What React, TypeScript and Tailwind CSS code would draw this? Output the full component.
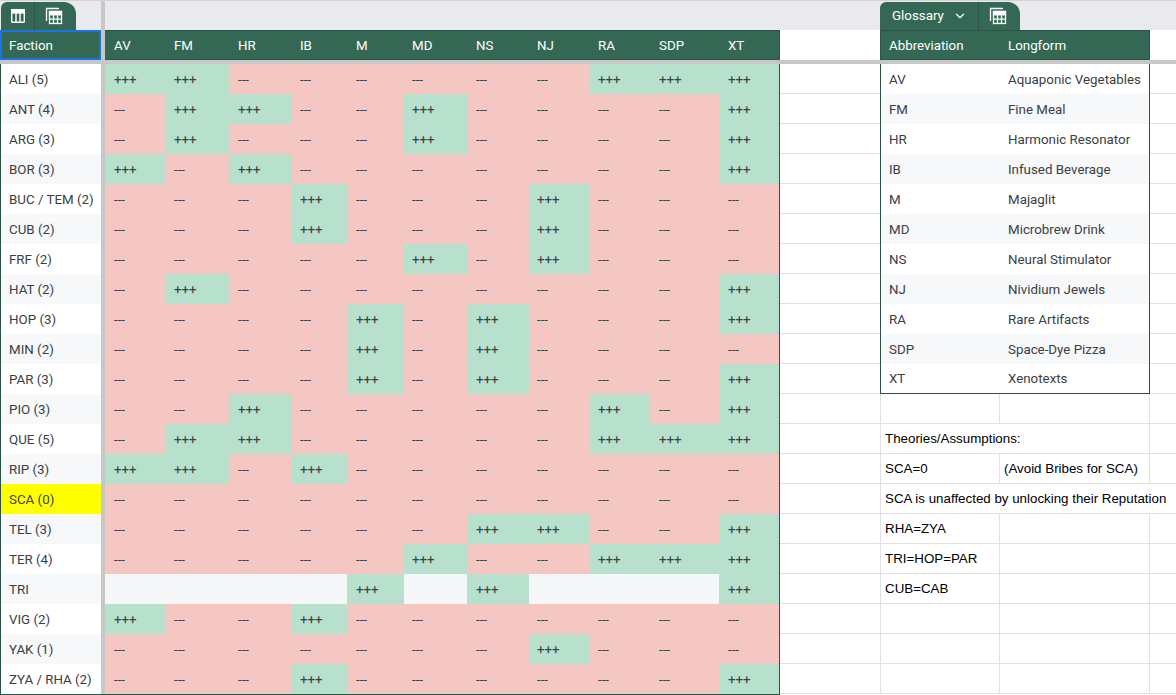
import { ChevronDown } from "lucide-react"

const columns = [
  { key: "AV", width: "w-[61px]", pad: "pl-[9px]" },
  { key: "FM", width: "w-[63px]", pad: "pl-2" },
  { key: "HR", width: "w-[63px]", pad: "pl-[9px]" },
  { key: "IB", width: "w-[55px]", pad: "pl-2" },
  { key: "M", width: "w-[57px]", pad: "pl-[9px]" },
  { key: "MD", width: "w-[63px]", pad: "pl-2" },
  { key: "NS", width: "w-[62px]", pad: "pl-[9px]" },
  { key: "NJ", width: "w-[61px]", pad: "pl-2" },
  { key: "RA", width: "w-[60px]", pad: "pl-2" },
  { key: "SDP", width: "w-[69px]", pad: "pl-[9px]" },
  { key: "XT", width: "w-[60px]", pad: "pl-[9px]" },
]

// + = green "+++", - = red "---", space = empty cell
const factions: [string, string][] = [
  ["ALI (5)", "++------+++"],
  ["ANT (4)", "-++--+----+"],
  ["ARG (3)", "-+---+----+"],
  ["BOR (3)", "+-+-------+"],
  ["BUC / TEM (2)", "---+---+---"],
  ["CUB (2)", "---+---+---"],
  ["FRF (2)", "-----+-+---"],
  ["HAT (2)", "-+--------+"],
  ["HOP (3)", "----+-+---+"],
  ["MIN (2)", "----+-+----"],
  ["PAR (3)", "----+-+---+"],
  ["PIO (3)", "--+-----+-+"],
  ["QUE (5)", "-++-----+++"],
  ["RIP (3)", "++-+-------"],
  ["SCA (0)", "-----------"],
  ["TEL (3)", "------++--+"],
  ["TER (4)", "-----+--+++"],
  ["TRI", "    + +   +"],
  ["VIG (2)", "+--+-------"],
  ["YAK (1)", "-------+---"],
  ["ZYA / RHA (2)", "---+------+"],
]

const glossary: [string, string][] = [
  ["AV", "Aquaponic Vegetables"],
  ["FM", "Fine Meal"],
  ["HR", "Harmonic Resonator"],
  ["IB", "Infused Beverage"],
  ["M", "Majaglit"],
  ["MD", "Microbrew Drink"],
  ["NS", "Neural Stimulator"],
  ["NJ", "Nividium Jewels"],
  ["RA", "Rare Artifacts"],
  ["SDP", "Space-Dye Pizza"],
  ["XT", "Xenotexts"],
]

type Note =
  | { kind: "empty" }
  | { kind: "pair"; a: string; b?: string }
  | { kind: "span"; text: string; wide?: boolean }

const notes: Note[] = [
  { kind: "empty" },
  { kind: "span", text: "Theories/Assumptions:" },
  { kind: "pair", a: "SCA=0", b: "(Avoid Bribes for SCA)" },
  { kind: "span", text: "SCA is unaffected by unlocking their Reputation", wide: true },
  { kind: "pair", a: "RHA=ZYA" },
  { kind: "pair", a: "TRI=HOP=PAR" },
  { kind: "pair", a: "CUB=CAB" },
  { kind: "empty" },
  { kind: "empty" },
  { kind: "empty" },
]

function TableIcon() {
  return (
    <svg width="16" height="16" viewBox="0 0 16 16" fill="none" stroke="white" strokeWidth="1.4">
      <rect x="1.7" y="1.7" width="12.6" height="12.6" rx="0.8" />
      <rect x="1.7" y="1.7" width="12.6" height="3.2" fill="white" />
      <path d="M6 4.9V14.3M10 4.9V14.3" />
    </svg>
  )
}

function StackedTableIcon() {
  return (
    <svg width="18" height="18" viewBox="0 0 18 18" fill="none" stroke="white" strokeWidth="1.3">
      <path d="M1.5 14V1.5H14" />
      <rect x="4.5" y="4.5" width="12" height="12" />
      <rect x="4.5" y="4.5" width="12" height="3.3" fill="white" />
      <path d="M4.5 12.2H16.5M8.5 7.8V16.5M12.5 7.8V16.5" />
    </svg>
  )
}

function NoteCells({ note }: { note: Note }) {
  const text = "font-['Liberation_Sans',Arial,sans-serif] text-[13.33px] text-black pt-px"
  if (note.kind === "span" && note.wide) {
    return (
      <div className={`flex h-[30px] flex-1 items-center whitespace-nowrap border-b border-l border-[#e1e1e1] pl-1 ${text}`}>
        {note.text}
      </div>
    )
  }
  if (note.kind === "span") {
    return (
      <>
        <div className={`flex h-[30px] w-[270px] shrink-0 items-center whitespace-nowrap border-x border-b border-[#e1e1e1] pl-1 ${text}`}>
          {note.text}
        </div>
        <div className="h-[30px] flex-1 border-b border-[#e1e1e1]" />
      </>
    )
  }
  return (
    <>
      <div className={`flex h-[30px] w-[119px] shrink-0 items-center whitespace-nowrap border-b border-l border-[#e1e1e1] pl-1 ${text}`}>
        {note.kind === "pair" ? note.a : null}
      </div>
      <div className={`flex h-[30px] w-[151px] shrink-0 items-center whitespace-nowrap border-x border-b border-[#e1e1e1] pl-1 ${text}`}>
        {note.kind === "pair" ? note.b : null}
      </div>
      <div className="h-[30px] flex-1 border-b border-[#e1e1e1]" />
    </>
  )
}

export default function App() {
  return (
    <div className="h-[695px] w-[1176px] overflow-hidden bg-white font-['Roboto',sans-serif] text-[13.33px] text-[#3c4043]">
      {/* sheet tabs strip */}
      <div className="flex h-[30px] border-t border-[#d3d3d3] bg-[#e8eaed]">
        <div className="flex w-[101px] shrink-0 items-end pl-px">
          <div className="flex h-[28px] w-[75px] items-center rounded-tl-md rounded-tr-xl bg-[#356854]">
            <div className="flex h-full w-[34px] items-center justify-center border-r border-[#2a5443]">
              <TableIcon />
            </div>
            <div className="flex flex-1 items-center justify-center pr-1">
              <StackedTableIcon />
            </div>
          </div>
        </div>
        <div className="w-[4px] shrink-0 bg-[#c7c7c7]" />
        <div className="flex flex-1 items-end pl-[775px]">
          <div className="flex h-[28px] w-[140px] items-center rounded-tl-md rounded-tr-xl bg-[#356854] text-white">
            <div className="flex h-full w-[99px] items-center gap-[9px] border-r border-[#2a5443] pl-3">
              <span>Glossary</span>
              <ChevronDown size={14} strokeWidth={2.2} />
            </div>
            <div className="flex flex-1 items-center justify-center pr-1">
              <StackedTableIcon />
            </div>
          </div>
        </div>
      </div>

      {/* header row */}
      <div className="flex h-[30px]">
        <div className="flex w-[101px] shrink-0 items-center border-2 border-[#1a73e8] bg-[#356854] pl-[7px] pt-px text-white">
          Faction
        </div>
        <div className="w-[4px] shrink-0 bg-[#c7c7c7]" />
        {columns.map((c) => (
          <div
            key={c.key}
            className={`flex shrink-0 items-center border-y border-[#2a5443] bg-[#356854] pt-px text-white ${c.width} ${c.pad}`}
          >
            {c.key}
          </div>
        ))}
        <div className="w-px shrink-0 bg-[#2a5443]" />
        <div className="w-[100px] shrink-0" />
        <div className="flex w-[270px] shrink-0 items-center border border-[#2a5443] bg-[#356854] pt-px text-white">
          <div className="w-[118px] pl-2">Abbreviation</div>
          <div className="pl-[9px]">Longform</div>
        </div>
        <div className="flex-1" />
      </div>

      {/* frozen row divider */}
      <div className="h-[4px] bg-[#c7c7c7]" />

      {/* data rows */}
      {factions.map(([name, marks], r) => {
        const factionBg =
          name === "SCA (0)"
            ? "bg-[#ffff00]"
            : r % 2 === 1
              ? "bg-[#f6f8f9]"
              : "bg-white"
        return (
          <div key={name} className="flex h-[30px]">
            <div className={`flex w-[101px] shrink-0 items-center whitespace-nowrap border-l border-[#2a5443] pl-[8px] pt-px ${factionBg}`}>
              {name}
            </div>
            <div className="w-[4px] shrink-0 bg-[#c7c7c7]" />
            {columns.map((c, i) => {
              const m = marks[i]
              const bg =
                m === "+" ? "bg-[#b7e1cd]" : m === "-" ? "bg-[#f4c7c3]" : "bg-[#f6f7f9]"
              return (
                <div key={c.key} className={`flex shrink-0 items-center pt-px ${c.width} ${c.pad} ${bg}`}>
                  {m === "+" ? "+++" : m === "-" ? "---" : ""}
                </div>
              )
            })}
            <div className="w-px shrink-0 bg-[#2a5443]" />
            <div className="w-[100px] shrink-0 border-b border-[#e1e1e1]" />
            {r < glossary.length ? (
              <>
                <div
                  className={`flex w-[270px] shrink-0 items-center border-x border-[#2a5443] pt-px ${
                    r === glossary.length - 1 ? "border-b" : ""
                  } ${r % 2 === 1 ? "bg-[#f6f8f9]" : "bg-white"}`}
                >
                  <div className="w-[118px] pl-2">{glossary[r][0]}</div>
                  <div className="whitespace-nowrap pl-[9px]">{glossary[r][1]}</div>
                </div>
                <div className="flex-1 border-b border-[#e1e1e1]" />
              </>
            ) : (
              <NoteCells note={notes[r - glossary.length]} />
            )}
          </div>
        )
      })}
      <div className="h-px w-[780px] bg-[#2a5443]" />
    </div>
  )
}
